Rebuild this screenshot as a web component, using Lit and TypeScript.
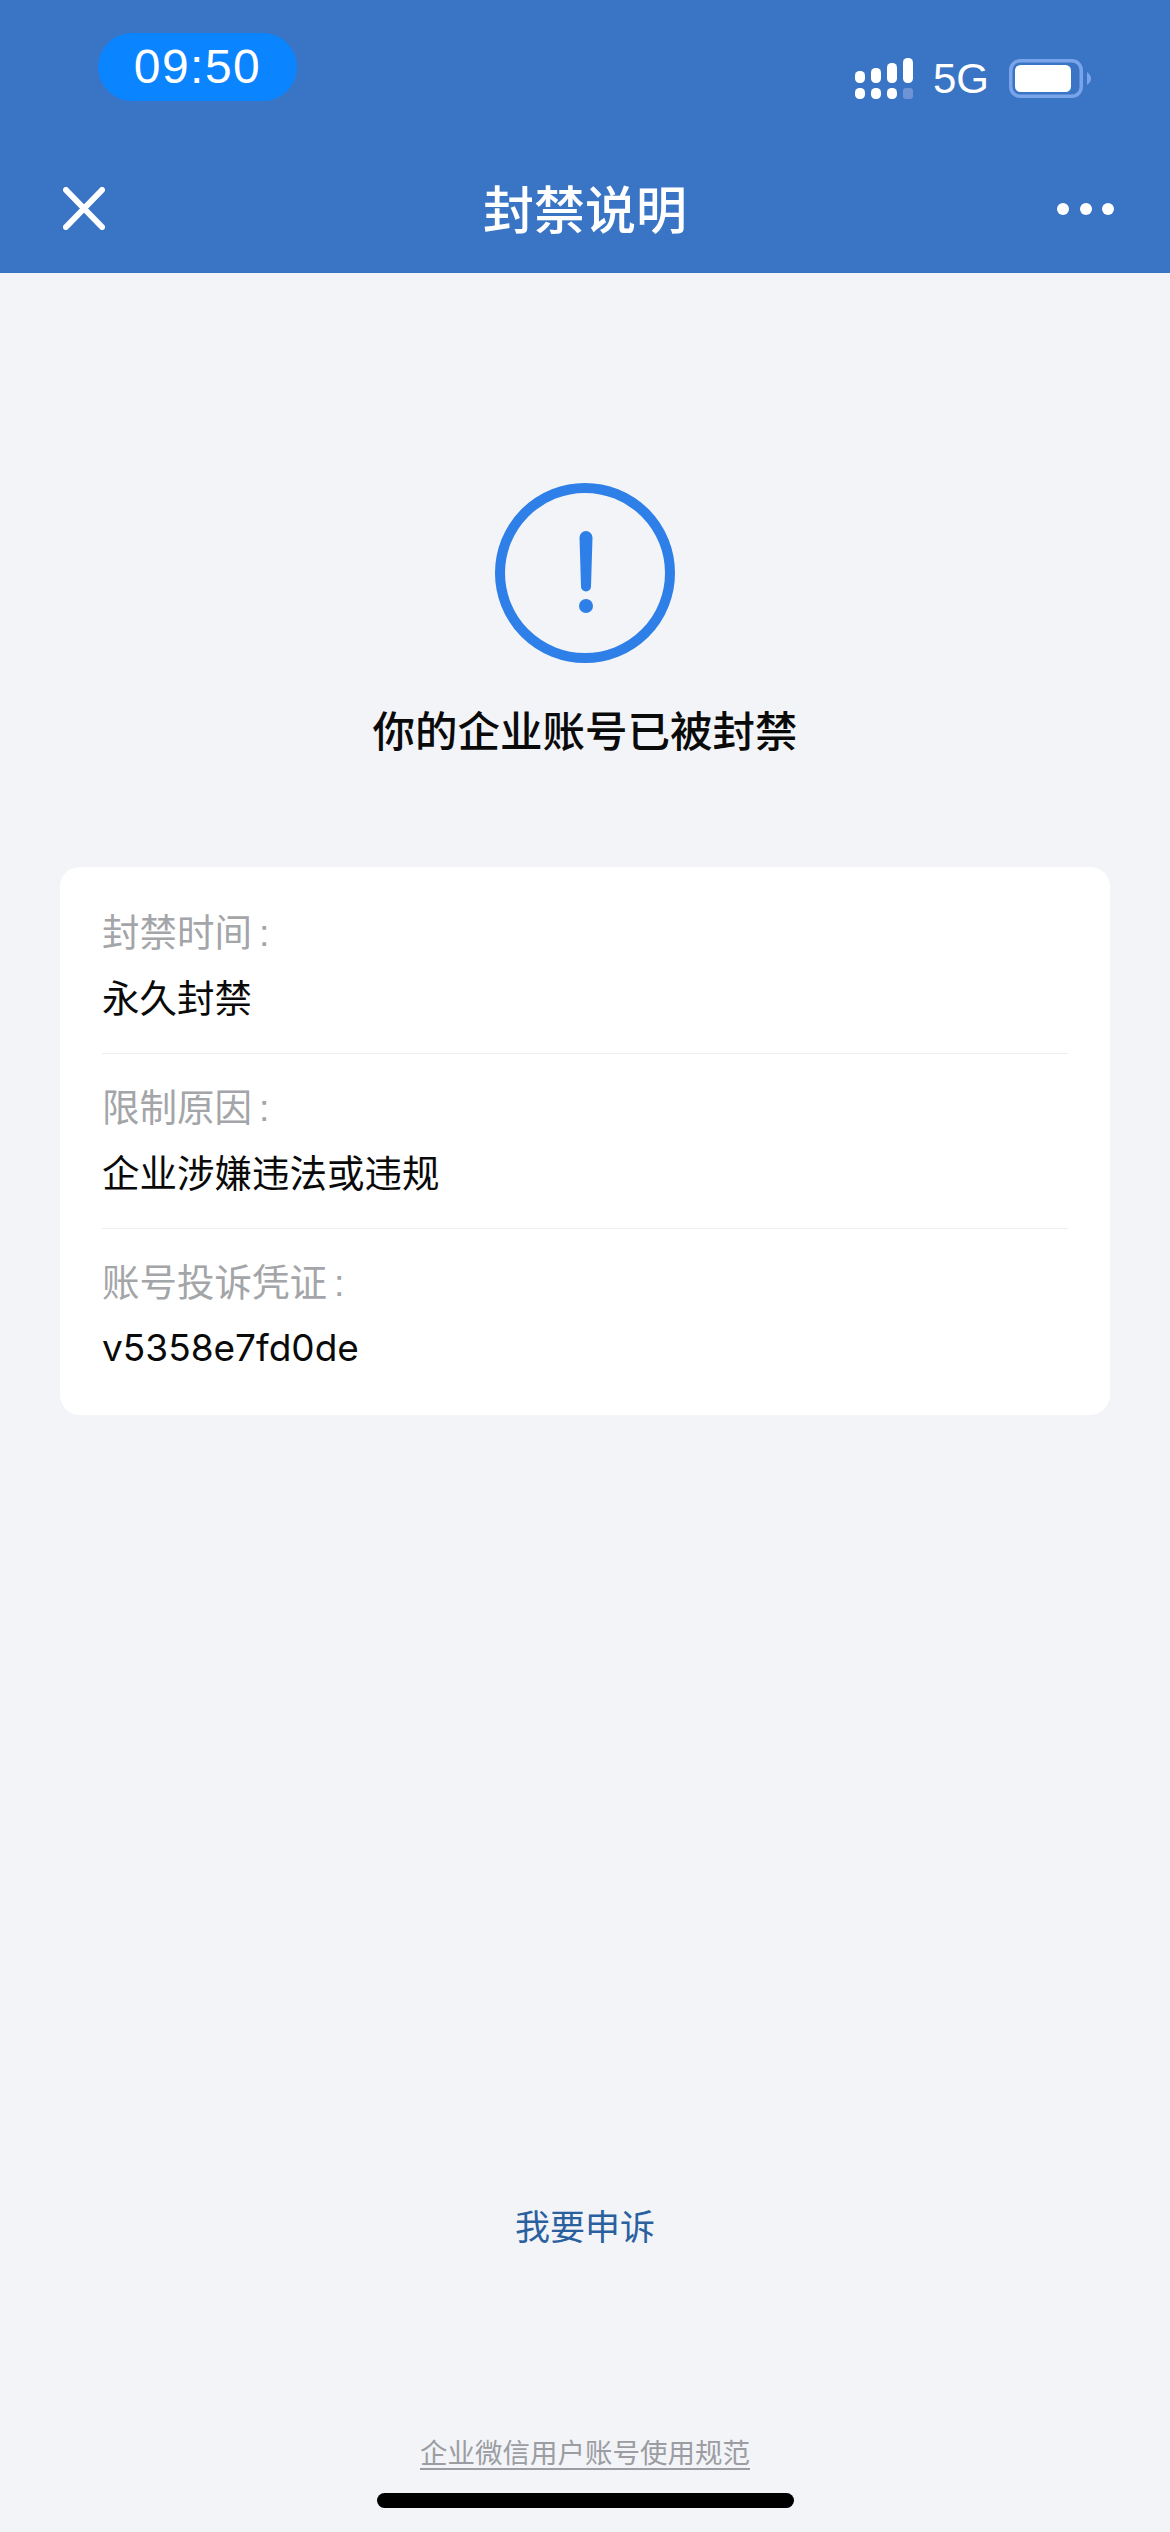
import { LitElement, html, css } from "lit";
import { customElement } from "lit/decorators.js";

@customElement("app-root")
export class AppRoot extends LitElement {
  static styles = css`
    :host {
      display: flex;
      flex-direction: column;
      width: 1170px;
      height: 2532px;
      background: #f2f4f7;
      font-family: "Noto Sans CJK SC", "Liberation Sans", sans-serif;
      overflow: hidden;
    }
    .header {
      height: 273px;
      background: #3a75c5;
      color: #fff;
      display: flex;
      flex-direction: column;
      flex: none;
    }
    .status {
      height: 130px;
      box-sizing: border-box;
      padding: 33px 79px 0 98px;
      display: flex;
      justify-content: space-between;
      align-items: flex-start;
    }
    .pill {
      width: 199px;
      height: 68px;
      border-radius: 34px;
      background: #0a84ff;
      display: flex;
      align-items: center;
      justify-content: center;
      font: 48px/68px "Liberation Sans", sans-serif;
      letter-spacing: 1.5px;
    }
    .sys {
      display: flex;
      align-items: center;
      margin-top: 11px;
      height: 68px;
    }
    .sys svg {
      display: block;
    }
    .net {
      font: 42px/50px "Liberation Sans", sans-serif;
      margin: 0 20px 0 20px;
      padding-top: 2px;
    }
    .nav {
      flex: 1;
      box-sizing: border-box;
      padding: 13px 56px 0;
      display: grid;
      grid-template-columns: 1fr auto 1fr;
      align-items: center;
    }
    .nav h1 {
      margin: 0;
      padding-bottom: 2px;
      font-size: 51px;
      line-height: 70px;
      font-weight: 500;
    }
    .close {
      display: block;
      margin-left: 7px;
    }
    .dots {
      justify-self: end;
      display: flex;
      gap: 10.5px;
      margin-top: 2px;
    }
    .dots i {
      width: 12px;
      height: 12px;
      border-radius: 50%;
      background: #fff;
    }
    .main {
      flex: 1;
      display: flex;
      flex-direction: column;
      align-items: center;
      padding-top: 210px;
    }
    .alert {
      display: block;
    }
    .main h2 {
      margin: 36px 0 108px;
      font-size: 42.5px;
      line-height: 60px;
      font-weight: 500;
      color: #0a0a0a;
    }
    .card {
      width: 1050px;
      box-sizing: border-box;
      background: #fff;
      border-radius: 20px;
      padding: 30px 42px 34px;
    }
    .row + .row {
      border-top: 1px solid #eeeeee;
      margin-top: 24px;
      padding-top: 18px;
    }
    .label,
    .value {
      font-size: 37.5px;
      line-height: 66px;
      white-space: nowrap;
    }
    .label {
      color: #a3a5a8;
    }
    .colon {
      font-family: "Liberation Sans", sans-serif;
      line-height: 1;
      margin-left: 7px;
    }
    .value {
      color: #0a0a0a;
    }
    .code {
      font-family: Inter, "Liberation Sans", sans-serif;
      font-size: 37px;
      padding-top: 2px;
    }
    .footer {
      display: flex;
      flex-direction: column;
      align-items: center;
      flex: none;
      padding-bottom: 24px;
    }
    .appeal {
      font-size: 35px;
      line-height: 50px;
      color: #2b609f;
    }
    .rules {
      margin-top: 181px;
      font-size: 27.5px;
      line-height: 40px;
      color: #9b9da2;
      text-decoration: underline;
      text-underline-offset: 5px;
      text-decoration-thickness: 2px;
    }
    .home {
      margin-top: 22px;
      width: 417px;
      height: 15px;
      border-radius: 8px;
      background: #000;
    }
  `;

  private rows = [
    { label: "封禁时间", value: "永久封禁", code: false },
    { label: "限制原因", value: "企业涉嫌违法或违规", code: false },
    { label: "账号投诉凭证", value: "v5358e7fd0de", code: true },
  ];

  render() {
    return html`
      <div class="header">
        <div class="status">
          <div class="pill">09:50</div>
          <div class="sys">
            <svg width="58" height="41" viewBox="0 0 58 41" fill="#fff">
              <rect x="0" y="13" width="10" height="12" rx="4.5" />
              <rect x="16" y="10" width="10" height="15" rx="4.5" />
              <rect x="32" y="5" width="10" height="20" rx="4.5" />
              <rect x="48" y="0" width="10" height="25" rx="4.5" />
              <rect x="0" y="30" width="10" height="11" rx="4.5" />
              <rect x="16" y="30" width="10" height="11" rx="4.5" />
              <rect x="32" y="30" width="10" height="11" rx="4.5" />
              <rect x="48" y="30" width="10" height="11" rx="3" fill="#6f94d6" />
            </svg>
            <span class="net">5G</span>
            <svg width="82" height="39" viewBox="0 0 82 39">
              <rect x="1.75" y="1.75" width="70.5" height="35.5" rx="9.5" fill="none" stroke="#7aa4ea" stroke-width="3.5" />
              <rect x="6" y="6" width="56" height="27" rx="5.5" fill="#fff" />
              <path d="M78 13 Q82 16 82 19.5 Q82 23 78 26 Z" fill="#7aa4ea" />
            </svg>
          </div>
        </div>
        <div class="nav">
          <svg class="close" width="42" height="43" viewBox="0 0 42 43">
            <path d="M3 3 L39 40 M39 3 L3 40" stroke="#fff" stroke-width="6" stroke-linecap="round" fill="none" />
          </svg>
          <h1>封禁说明</h1>
          <div class="dots"><i></i><i></i><i></i></div>
        </div>
      </div>
      <div class="main">
        <svg class="alert" width="180" height="180" viewBox="0 0 180 180">
          <circle cx="90" cy="90" r="85" fill="none" stroke="#2e7fe8" stroke-width="10" />
          <path d="M84.5 54.5 a6.5 6.5 0 0 1 13 0 l-1.5 49 a5 5 0 0 1 -10 0 z" fill="#2e7fe8" />
          <circle cx="91" cy="123" r="7" fill="#2e7fe8" />
        </svg>
        <h2>你的企业账号已被封禁</h2>
        <div class="card">
          ${this.rows.map(
            (r) => html`
              <div class="row">
                <div class="label">${r.label}<span class="colon">:</span></div>
                <div class="value ${r.code ? "code" : ""}">${r.value}</div>
              </div>
            `
          )}
        </div>
      </div>
      <div class="footer">
        <div class="appeal">我要申诉</div>
        <div class="rules">企业微信用户账号使用规范</div>
        <div class="home"></div>
      </div>
    `;
  }
}
